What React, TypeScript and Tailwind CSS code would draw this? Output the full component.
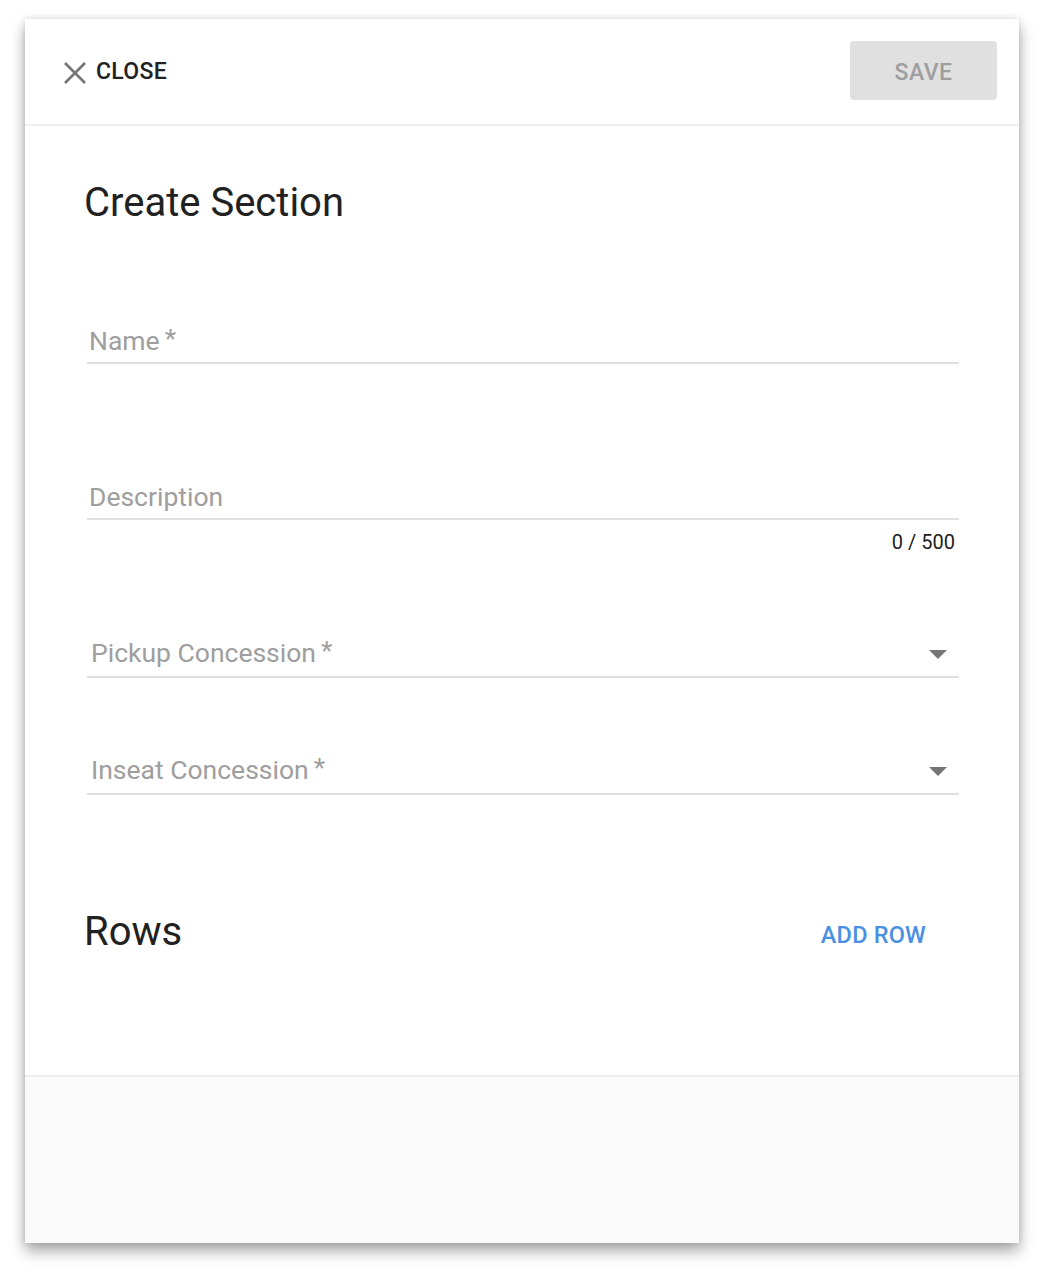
import React from "react";

const font = { fontFamily: "Roboto, 'Noto Sans', sans-serif" };

function Field({ label, required, select, counter }: { label: string; required?: boolean; select?: boolean; counter?: string }) {
  return (
    <div className="flex flex-col">
      <div className={`flex items-center h-[44px] border-b-2 border-[#e0e0e0] pr-[10px] ${select ? "pl-[4px] pb-[4px]" : "pl-[2px]"}`}>
        <span className="text-[26.5px] text-[#9e9e9e] leading-none flex-1">
          {label}
          {required && <span className="ml-[5px] relative top-[-3px]">*</span>}
        </span>
        {select && (
          <svg width="18" height="9" viewBox="0 0 18 9" className="mr-[2px] mt-[2px]">
            <path d="M0 0 L18 0 L9 9 Z" fill="#757575" />
          </svg>
        )}
      </div>
      {counter && <div className="text-right text-[20px] text-[#212121] mt-[12px] pr-[4px] leading-none">{counter}</div>}
    </div>
  );
}

export default function App() {
  return (
    <div className="w-[1050px] h-[1278px] bg-white pt-[19px] pl-[25px]" style={font}>
      <div className="w-[994px] h-[1224px] bg-white flex flex-col shadow-[0_8px_14px_rgba(0,0,0,0.35),0_0_6px_rgba(0,0,0,0.12)]">
        <div className="h-[107px] flex items-center justify-between pl-[38px] pr-[22px] border-b-2 border-[#eeeeee]">
          <button className="flex items-center gap-[9px] text-[23px] font-medium text-[#212121] tracking-[0.3px] mt-[2px]">
            <svg width="24" height="24" viewBox="0 0 24 24">
              <path d="M2 2 L22 22 M22 2 L2 22" stroke="#757575" strokeWidth="2.6" />
            </svg>
            CLOSE
          </button>
          <button className="w-[147px] h-[59px] rounded-[4px] bg-[#e0e0e0] text-[#9e9e9e] text-[23px] font-medium tracking-[0.5px] mt-[-3px] pt-[4px] leading-none">
            SAVE
          </button>
        </div>
        <div className="flex-1 flex flex-col pl-[59px] pr-[60px]">
          <h1 className="text-[40px] text-[#212121] mt-[57px] leading-none">Create Section</h1>
          <div className="pl-[3px] flex flex-col">
            <div className="mt-[97px]"><Field label="Name" required /></div>
            <div className="mt-[112px]"><Field label="Description" counter="0 / 500" /></div>
            <div className="mt-[82px]"><Field label="Pickup Concession" required select /></div>
            <div className="mt-[73px]"><Field label="Inseat Concession" required select /></div>
          </div>
          <div className="flex items-center justify-between mt-[115px] pr-[32px]">
            <h2 className="text-[40px] text-[#212121] leading-none">Rows</h2>
            <button className="text-[23.5px] font-medium text-[#4a90e2] mt-[8px] tracking-[0.2px] mr-[1px]">ADD ROW</button>
          </div>
        </div>
        <div className="h-[168px] bg-[#fafafa] border-t-2 border-[#eeeeee]" />
      </div>
    </div>
  );
}
